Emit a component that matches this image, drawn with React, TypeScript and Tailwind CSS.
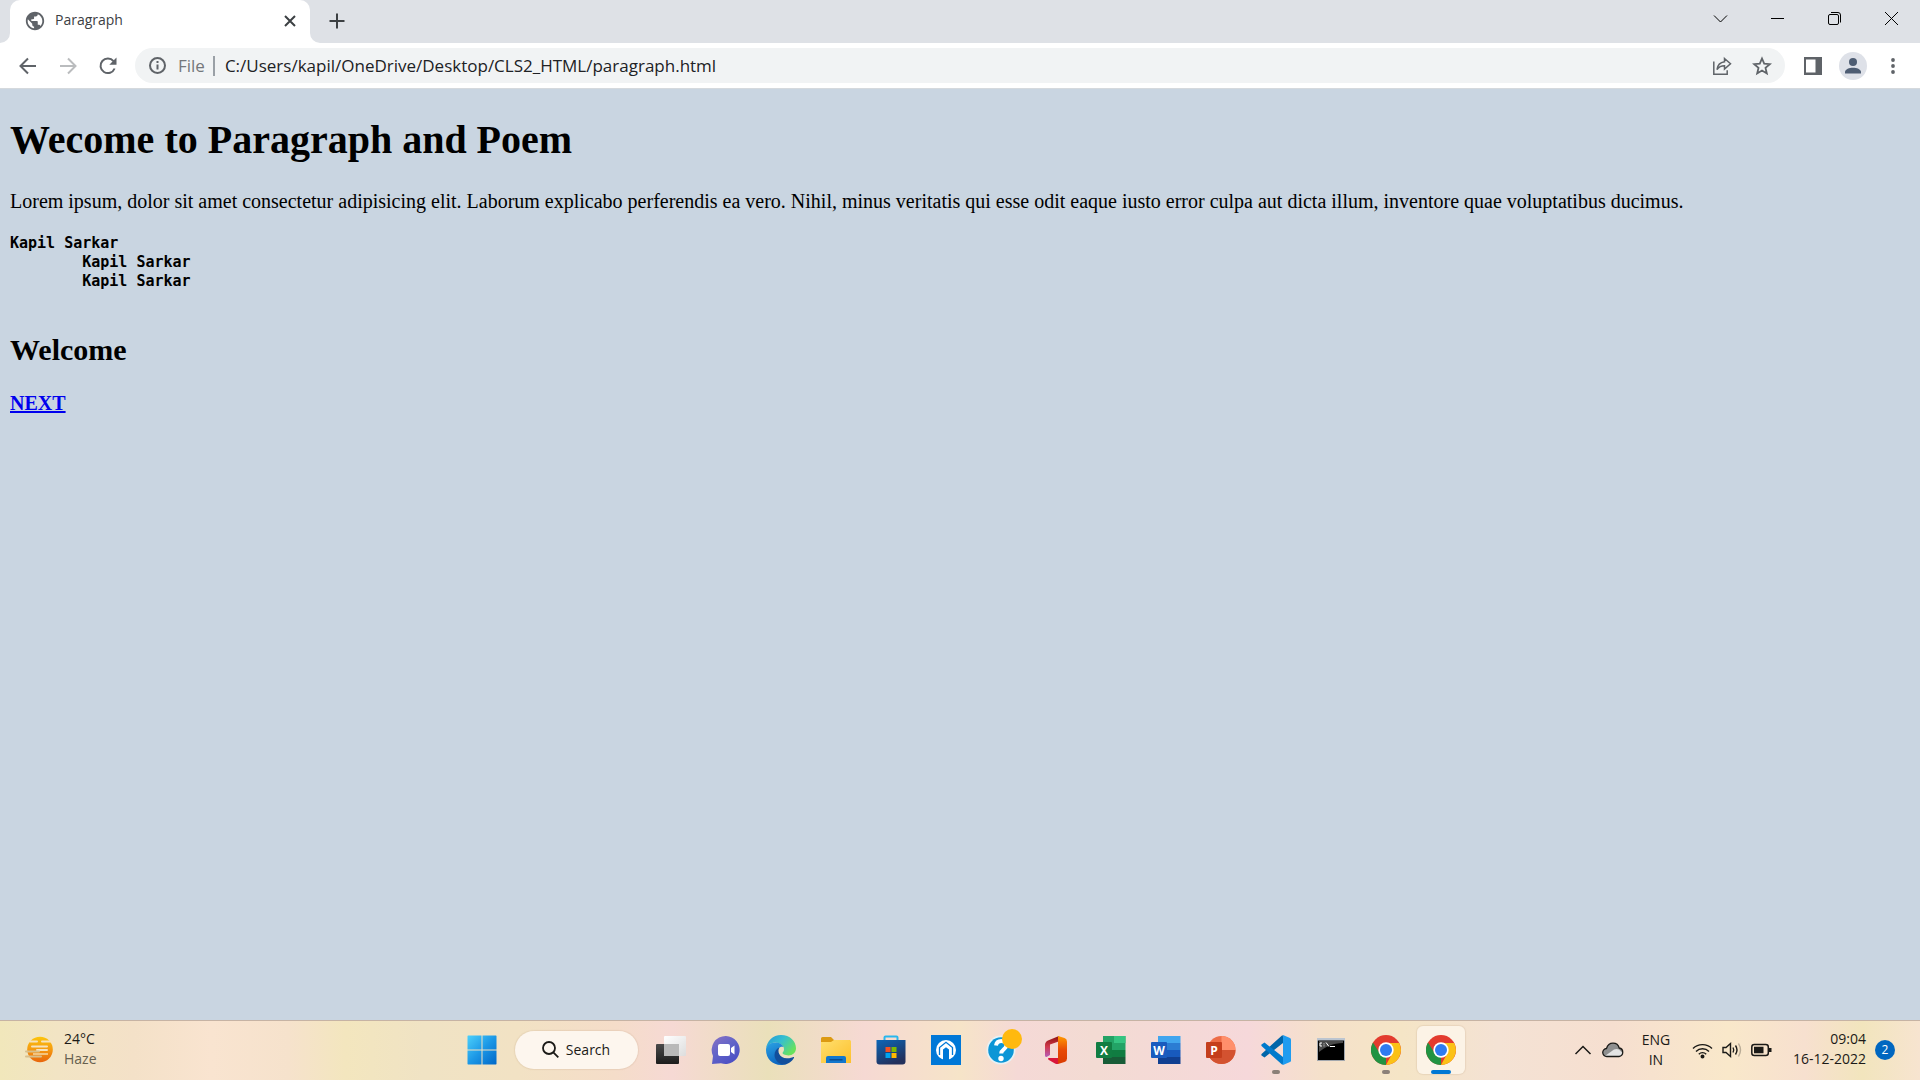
import React from "react";

type Kids = { children?: React.ReactNode };

/* ---------- Browser chrome ---------- */

function WindowButton({ label, children }: Kids & { label: string }) {
  return (
    <button aria-label={label} className="flex h-9 w-[57px] items-center justify-center text-black">
      <svg width="15" height="15" viewBox="0 0 15 15" fill="none" stroke="currentColor">
        {children}
      </svg>
    </button>
  );
}

function TabStrip() {
  return (
    <div className="flex h-[43px] justify-between bg-[#dee1e6]">
      <div className="flex">
        <svg className="self-end" width="10" height="10" viewBox="0 0 10 10">
          <path d="M10 0v10H0A10 10 0 0 0 10 0Z" fill="#fff" />
        </svg>
        <div className="flex w-[300px] items-center rounded-t-[10px] bg-white pr-3 pb-px pl-[14px]">
          <svg width="22" height="22" viewBox="0 0 24 24" fill="#5f6368">
            <path d="M12 2C6.480 2 2 6.480 2 12s4.480 10 10 10 10-4.480 10-10S17.520 2 12 2zm-1 17.930c-3.950-.490-7-3.850-7-7.930 0-.620.080-1.210.210-1.790L9 15v1c0 1.100.900 2 2 2v1.930zm6.900-2.540c-.260-.810-1-1.390-1.900-1.390h-1v-3c0-.550-.450-1-1-1H8v-2h2c.550 0 1-.450 1-1V7h2c1.100 0 2-.900 2-2v-.410c2.930 1.190 5 4.060 5 7.410 0 2.080-.800 3.970-2.100 5.390z" />
          </svg>
          <span className="ml-[9px] flex-1 pb-[2px] text-sm leading-5 text-[#3c4043]">Paragraph</span>
          <button aria-label="Close tab" className="flex size-4 items-center justify-center">
            <svg width="12" height="12" viewBox="0 0 12 12" stroke="#3c4043" strokeWidth="2">
              <path d="M1 1l10 10M11 1L1 11" />
            </svg>
          </button>
        </div>
        <svg className="self-end" width="10" height="10" viewBox="0 0 10 10">
          <path d="M0 0v10h10A10 10 0 0 1 0 0Z" fill="#fff" />
        </svg>
        <button aria-label="New tab" className="flex w-[34px] items-center justify-center pb-px">
          <svg width="16" height="16" viewBox="0 0 16 16" stroke="#3c4043" strokeWidth="2">
            <path d="M8 .5v15M.5 8h15" />
          </svg>
        </button>
      </div>
      <div className="flex">
        <WindowButton label="Search tabs">
          <path d="M1 4.500l6.500 6.500 6.500-6.500" />
        </WindowButton>
        <WindowButton label="Minimize">
          <path d="M1 7.500h13" />
        </WindowButton>
        <WindowButton label="Restore">
          <rect x="1.500" y="3.500" width="10" height="10" rx="1.500" />
          <path d="M4 1.500h7a2.500 2.500 0 0 1 2.500 2.500v7.500" />
        </WindowButton>
        <WindowButton label="Close">
          <path d="M1 1l13 13M14 1L1 14" />
        </WindowButton>
      </div>
    </div>
  );
}

function ToolButton({ label, children }: Kids & { label: string }) {
  return (
    <button aria-label={label} className="flex h-8 w-10 shrink-0 items-center justify-center">
      {children}
    </button>
  );
}

function Toolbar() {
  return (
    <div className="flex h-[46px] items-center border-b border-[#d5d9dd] bg-white pr-[7px] pl-2">
      <ToolButton label="Back">
        <svg width="18" height="18" viewBox="0 0 18 18" fill="none" stroke="#5f6368" strokeWidth="2">
          <path d="M17 9H2M9 1.500L1.500 9 9 16.500" />
        </svg>
      </ToolButton>
      <ToolButton label="Forward">
        <svg width="18" height="18" viewBox="0 0 18 18" fill="none" stroke="#babcbe" strokeWidth="2">
          <path d="M1 9h15M9 1.500L16.500 9 9 16.500" />
        </svg>
      </ToolButton>
      <ToolButton label="Reload">
        <svg width="18" height="18" viewBox="0 0 18 18" fill="none">
          <path d="M15.600 11.500A7.300 7.300 0 1 1 14.500 4.200" stroke="#5f6368" strokeWidth="2" />
          <path d="M17.500 .5v7.200h-7.200Z" fill="#5f6368" />
        </svg>
      </ToolButton>
      <div className="ml-[7px] flex h-[35px] flex-1 items-center rounded-full bg-[#f1f3f4] pr-[3px] pl-[14px]">
        <svg width="17" height="17" viewBox="0 0 17 17" fill="none" stroke="#5f6368" strokeWidth="2">
          <circle cx="8.500" cy="8.500" r="7.500" />
          <path d="M8.500 7.500v5M8.500 4v2" />
        </svg>
        <label htmlFor="url" className="ml-3 text-[17px] leading-6 text-[#74777b]">
          File
        </label>
        <span className="ml-2 h-5 w-[2px] bg-[#9aa0a6]" />
        <input
          id="url"
          className="ml-[10px] min-w-0 flex-1 bg-transparent text-[17px] leading-6 text-[#202124] outline-none"
          defaultValue="C:/Users/kapil/OneDrive/Desktop/CLS2_HTML/paragraph.html"
        />
        <ToolButton label="Share">
          <svg width="20" height="20" viewBox="0 0 20 20" fill="none" stroke="#5f6368" strokeWidth="1.500">
            <path d="M1.800 5.500v12.800h13.400v-4" />
            <path d="M12.500 2.500l6 5.300-6 5.300v-3.300c-3.500 0-5.700 1.200-7.500 3.800.5-4 3-7.200 7.500-7.800Z" />
          </svg>
        </ToolButton>
        <ToolButton label="Bookmark">
          <svg width="20" height="20" viewBox="0 0 20 20" fill="none" stroke="#5f6368" strokeWidth="1.800">
            <path d="M10 2.500l2.200 5.200 5.600.5-4.300 3.700 1.300 5.500-4.800-2.900-4.800 2.900 1.300-5.500L2.200 8.200l5.600-.5Z" />
          </svg>
        </ToolButton>
      </div>
      <div className="ml-2 flex">
        <ToolButton label="Side panel">
          <svg width="18" height="18" viewBox="0 0 18 18">
            <path fillRule="evenodd" d="M0 0h18v18H0ZM2 2.500v13h9.500v-13Z" fill="#5f6368" />
          </svg>
        </ToolButton>
        <ToolButton label="Profile">
          <svg width="28" height="28" viewBox="0 0 28 28">
            <circle cx="14" cy="14" r="14" fill="#dee1e8" />
            <circle cx="14" cy="10" r="4" fill="#4e5d73" />
            <path d="M6 21.500v-1.500c0-2.700 4.500-4.200 8-4.200s8 1.500 8 4.200v1.500Z" fill="#4e5d73" />
          </svg>
        </ToolButton>
        <ToolButton label="Menu">
          <svg width="4" height="16" viewBox="0 0 4 16" fill="#5f6368">
            <circle cx="2" cy="2" r="1.900" />
            <circle cx="2" cy="8" r="1.900" />
            <circle cx="2" cy="14" r="1.900" />
          </svg>
        </ToolButton>
      </div>
    </div>
  );
}

/* ---------- Page ---------- */

const poem = "Kapil Sarkar\n        Kapil Sarkar\n        Kapil Sarkar\n";

function Page() {
  return (
    <main className="flex-1 bg-[#c9d5e1] px-[10px] pt-7 font-['Liberation_Serif',serif] text-xl text-black">
      <h1 className="text-[40px] leading-[46px] font-bold">Wecome to Paragraph and Poem</h1>
      <p className="mt-[26px] leading-6">
        Lorem ipsum, dolor sit amet consectetur adipisicing elit. Laborum explicabo perferendis ea vero. Nihil, minus
        veritatis qui esse odit eaque iusto error culpa aut dicta illum, inventore quae voluptatibus ducimus.
      </p>
      <pre className="mt-[21px] font-['DejaVu_Sans_Mono',monospace] text-[15px] leading-[19px] font-bold">{poem}</pre>
      <h2 className="mt-[42px] text-3xl leading-[34px] font-bold">Welcome</h2>
      <a href="#next" className="mt-6 inline-block leading-6 font-bold text-[#0000ee] underline">
        NEXT
      </a>
    </main>
  );
}

/* ---------- Taskbar icons ---------- */

function StartIcon() {
  return (
    <svg width="30" height="30" viewBox="0 0 30 30">
      <defs>
        <linearGradient id="win" x1="0" y1="0" x2="1" y2="1">
          <stop offset="0" stopColor="#4cd0fb" />
          <stop offset="0.500" stopColor="#1c98e6" />
          <stop offset="1" stopColor="#0067c8" />
        </linearGradient>
      </defs>
      <path
        d="M1 .5h13.500v14H.5V1ZM15.500 .5h13.500l.5.5v13.500h-14ZM.5 15.500h14v14H1l-.5-.5ZM15.500 15.500h14V29l-.5.5h-13.500Z"
        fill="url(#win)"
      />
    </svg>
  );
}

function TaskViewIcon() {
  return (
    <svg width="30" height="30" viewBox="0 0 30 30">
      <defs>
        <linearGradient id="tvd" x1="0" y1="0" x2="0" y2="1">
          <stop offset="0" stopColor="#4a4a4a" />
          <stop offset="1" stopColor="#1c1c1c" />
        </linearGradient>
        <linearGradient id="tvl" x1="0" y1="0" x2="1" y2="1">
          <stop offset="0" stopColor="#fff" />
          <stop offset="1" stopColor="#ddd" />
        </linearGradient>
      </defs>
      <rect x="8" y="1" width="22" height="20" rx="1" fill="url(#tvl)" />
      <rect x="0" y="9" width="23" height="20" rx="1" fill="url(#tvd)" />
      <rect x="8" y="9" width="15" height="12" fill="#b9b9b9" />
    </svg>
  );
}

function ChatIcon() {
  return (
    <svg width="30" height="30" viewBox="0 0 30 30">
      <defs>
        <linearGradient id="chat" x1="0" y1="0" x2="0.700" y2="1">
          <stop offset="0" stopColor="#8a72c4" />
          <stop offset="0.500" stopColor="#6264c8" />
          <stop offset="1" stopColor="#4b4fc4" />
        </linearGradient>
      </defs>
      <path d="M15 1a14 14 0 1 1-5 27.200L1 29l1-8A14 14 0 0 1 15 1Z" fill="url(#chat)" />
      <rect x="7" y="9" width="12" height="12" rx="2" fill="#fff" />
      <path d="M20 13l3.500-2.500v9L20 17Z" fill="#fff" />
    </svg>
  );
}

function EdgeIcon() {
  return (
    <svg width="30" height="30" viewBox="0 0 30 30">
      <defs>
        <linearGradient id="eTop" x1="0" y1="0" x2="1" y2="0.600">
          <stop offset="0" stopColor="#2495d8" />
          <stop offset="0.500" stopColor="#35bfd0" />
          <stop offset="1" stopColor="#68e25c" />
        </linearGradient>
        <linearGradient id="eLeft" x1="0" y1="0" x2="0.400" y2="1">
          <stop offset="0" stopColor="#2ba3e4" />
          <stop offset="1" stopColor="#0c66c0" />
        </linearGradient>
      </defs>
      <path
        d="M0 14C.8 6 7 0 15 0c9 0 15 6.300 15 13.200 0 4.500-3.500 7.200-7.500 7.200-4 0-6-1.300-6-2.300s1.500-1.500 1.500-3.900C18 10.500 14 7.500 9.500 7.500 4.500 7.500 1 10.500 0 14Z"
        fill="url(#eTop)"
      />
      <path
        d="M0 15C0 10.500 4 7.500 9.500 7.500c4 0 7 2 8 4.500-3-1-7 1.500-7 6.500 0 5.500 5 10 9.500 10.500-1.500.700-3.500 1-5 1C6.500 30 0 23.500 0 15Z"
        fill="url(#eLeft)"
      />
      <path
        d="M13.500 12.500c-2.500 3.500-.5 10.500 7.500 10.800 3 .100 5-.800 6.200-1.300.700-.300 1.100.300.700.900C26 26.500 22 29.300 18 29.500 12 29 8.500 24.500 8.500 20c0-3.500 2-6.500 5-7.500Z"
        fill="#124f9c"
      />
    </svg>
  );
}

function ExplorerIcon() {
  return (
    <svg width="30" height="28" viewBox="0 0 30 28">
      <defs>
        <linearGradient id="fold" x1="0" y1="0" x2="1" y2="1">
          <stop offset="0" stopColor="#ffdf6e" />
          <stop offset="1" stopColor="#fdc02c" />
        </linearGradient>
      </defs>
      <path d="M0 2.500Q0 1 1.500 1H10l3 3h16v4H0Z" fill="#dc9a12" />
      <path d="M0 6h10l3-2h15.500Q30 4 30 5.500V27H0Z" fill="url(#fold)" />
      <path d="M5 27v-5q0-2 2-2h16q2 0 2 2v5Z" fill="#1277cd" />
      <rect x="8.500" y="23" width="13" height="1.500" fill="#0b4c90" />
    </svg>
  );
}

function StoreIcon() {
  return (
    <svg width="30" height="30" viewBox="0 0 30 30">
      <defs>
        <linearGradient id="bag" x1="0" y1="0" x2="0.500" y2="1">
          <stop offset="0" stopColor="#0b66b7" />
          <stop offset="1" stopColor="#23305c" />
        </linearGradient>
      </defs>
      <path d="M8.500 6V2.500q0-1 1-1h11q1 0 1 1V6" fill="none" stroke="#29b7ee" strokeWidth="2" />
      <path d="M.5 5h29v21.500q0 3-3 3h-23q-3 0-3-3Z" fill="url(#bag)" />
      <path d="M9.500 12h5v5h-5Z" fill="#f25022" />
      <path d="M15.500 12h5v5h-5Z" fill="#7fba00" />
      <path d="M9.500 18h5v5h-5Z" fill="#00a4ef" />
      <path d="M15.500 18h5v5h-5Z" fill="#ffb900" />
    </svg>
  );
}

function AssistantIcon() {
  return (
    <svg width="30" height="30" viewBox="0 0 30 30" fill="none">
      <path d="M0 0h30v30H0Z" fill="#0078d7" />
      <circle cx="15" cy="15" r="10" fill="#fff" />
      <path d="M8.500 20v-7.500L15 7.300l6.500 5.200V20" stroke="#0078d7" strokeWidth="1.300" />
      <path d="M12 26V14.500l3-2.300 3 2.300V26Z" fill="#0078d7" />
    </svg>
  );
}

function HelpIcon() {
  return (
    <svg className="overflow-visible" width="30" height="30" viewBox="0 0 30 30">
      <circle cx="15" cy="15" r="14.500" fill="#e6f1f5" />
      <circle cx="15" cy="15" r="12.800" fill="#0c96d6" />
      <path
        d="M10 10.500c.5-3 2.500-4.500 5.200-4.500 3 0 5.200 1.800 5.200 4.400 0 3.800-5.200 4-5.200 8.100"
        fill="none"
        stroke="#fff"
        strokeWidth="4"
      />
      <circle cx="15" cy="23.500" r="2.700" fill="#fff" />
      <circle cx="26" cy="4" r="10" fill="#ffb90f" />
    </svg>
  );
}

function OfficeIcon() {
  return (
    <svg width="30" height="30" viewBox="0 0 30 30">
      <defs>
        <linearGradient id="offL" x1="0" y1="0" x2="0" y2="1">
          <stop offset="0" stopColor="#8b0f0f" />
          <stop offset="0.500" stopColor="#d03a4c" />
          <stop offset="1" stopColor="#b65bb8" />
        </linearGradient>
        <linearGradient id="offR" x1="0" y1="0" x2="0" y2="1">
          <stop offset="0" stopColor="#ff9a00" />
          <stop offset="0.500" stopColor="#e84a05" />
          <stop offset="1" stopColor="#d93a00" />
        </linearGradient>
      </defs>
      <path d="M18 1L7 5.500Q4 7 4 10v10.500q0 2 2 1.200l3-1.700V9.500l10-3.500Z" fill="url(#offL)" />
      <path d="M17 1l6.500 2q2.500.800 2.500 3.500v17q0 2.700-2.500 3.500L17 29Z" fill="url(#offR)" />
      <path d="M7.500 23H17v6q-1.500.300-3-.500L7.500 24.800Q6.500 23.500 7.500 23Z" fill="#d9163a" />
    </svg>
  );
}

const officeText = "'Open Sans', sans-serif";

function Tile({ letter, fill }: { letter: string; fill: string }) {
  return (
    <>
      <rect x="0" y="7" width="16" height="16" rx="1" fill={fill} />
      <text x="8" y="19.500" textAnchor="middle" fontFamily={officeText} fontWeight="700" fontSize="12" fill="#fff">
        {letter}
      </text>
    </>
  );
}

function ExcelIcon() {
  return (
    <svg width="30" height="30" viewBox="0 0 30 30">
      <path d="M7 1h22.500v14H7Z" fill="#23a366" />
      <path d="M18 1h11.500v7H18Z" fill="#34c481" />
      <path d="M7 15h22.500v7H7Z" fill="#107c41" />
      <path d="M7 22h22.500v7H7Z" fill="#185c37" />
      <Tile letter="X" fill="#117d42" />
    </svg>
  );
}

function WordIcon() {
  return (
    <svg width="30" height="30" viewBox="0 0 30 30">
      <path d="M7 1h22.500v7H7Z" fill="#41a5ee" />
      <path d="M7 8h22.500v7H7Z" fill="#2b7cd3" />
      <path d="M7 15h22.500v7H7Z" fill="#185abd" />
      <path d="M7 22h22.500v7H7Z" fill="#103f91" />
      <Tile letter="W" fill="#1a5bbe" />
    </svg>
  );
}

function PowerPointIcon() {
  return (
    <svg width="30" height="30" viewBox="0 0 30 30">
      <circle cx="15.500" cy="15" r="14" fill="#ed6c47" />
      <path d="M15.500 1a14 14 0 0 1 14 14h-14Z" fill="#ff8f6b" />
      <path d="M1.500 15h28a14 14 0 0 1-28 0Z" fill="#d35230" />
      <Tile letter="P" fill="#c43e1c" />
    </svg>
  );
}

function CodeIcon() {
  return (
    <svg width="30" height="30" viewBox="0 0 30 30">
      <path d="M22 8L3.500 22.500 .5 20.500Q0 19.500 .8 18.700L21.500 0 24 8Z" fill="#0065a9" />
      <path d="M22 22L3.500 7.500 .5 9.500Q0 10.500 .8 11.300L21.500 30 24 22Z" fill="#007acc" />
      <path d="M22 0l7 3q1 .5 1 1.500v21q0 1-1 1.500l-7 3Z" fill="#1f9cf0" />
    </svg>
  );
}

function TerminalIcon() {
  return (
    <svg width="28" height="24" viewBox="0 0 28 24">
      <rect x="0.500" y="0.500" width="27" height="22" fill="#000" stroke="#a3a8ae" />
      <path d="M0 0h28v2.500H0Z" fill="#bcc5d0" />
      <path d="M2 3h24v2C16 5 8 9 2 14Z" fill="#4a4a4a" />
      <path d="M5 5H3v3h2M7 5.500v.8M7 7.500v.8M9 4.500l3 4M13 8.500h5" stroke="#fff" fill="none" />
    </svg>
  );
}

function ChromeIcon() {
  return (
    <svg width="30" height="30" viewBox="0 0 30 30">
      <circle cx="15" cy="15" r="15" fill="#e33b2e" />
      <path d="M2 7.500L8.900 18.500 15 22v8A15 15 0 0 1 2 7.500Z" fill="#229342" />
      <path d="M15 8h13.200A15 15 0 0 1 15 30l6.200-11.500Z" fill="#fbc116" />
      <circle cx="15" cy="15" r="7.700" fill="#fff" />
      <circle cx="15" cy="15" r="6" fill="#2f7bf0" />
    </svg>
  );
}

type TaskApp = { name: string; icon: React.ReactNode; state?: "open" | "active" };

const apps: TaskApp[] = [
  { name: "Task View", icon: <TaskViewIcon /> },
  { name: "Chat", icon: <ChatIcon /> },
  { name: "Microsoft Edge", icon: <EdgeIcon /> },
  { name: "File Explorer", icon: <ExplorerIcon /> },
  { name: "Microsoft Store", icon: <StoreIcon /> },
  { name: "Assistant", icon: <AssistantIcon /> },
  { name: "Get Help", icon: <HelpIcon /> },
  { name: "Office", icon: <OfficeIcon /> },
  { name: "Excel", icon: <ExcelIcon /> },
  { name: "Word", icon: <WordIcon /> },
  { name: "PowerPoint", icon: <PowerPointIcon /> },
  { name: "Visual Studio Code", icon: <CodeIcon />, state: "open" },
  { name: "Command Prompt", icon: <TerminalIcon /> },
  { name: "Google Chrome", icon: <ChromeIcon />, state: "open" },
  { name: "Google Chrome, Paragraph", icon: <ChromeIcon />, state: "active" },
];

function TaskButton({ app }: { app: TaskApp }) {
  const active = app.state === "active";
  return (
    <button
      aria-label={app.name}
      className={
        "relative flex h-12 w-12 items-center justify-center rounded-md " +
        (active ? "bg-[#fcf3e6] shadow-[0_0_1px_1px_rgba(190,160,130,0.2)]" : "")
      }
    >
      {app.icon}
      {app.state === "open" && <span className="absolute bottom-0 left-5 h-1 w-2 rounded-full bg-[#8b8078]" />}
      {active && <span className="absolute bottom-0 left-[14px] h-1 w-5 rounded-full bg-[#0078d4]" />}
    </button>
  );
}

function Weather() {
  return (
    <button aria-label="Weather" className="flex h-full items-center gap-[9px] pl-[25px] text-left">
      <svg width="30" height="28" viewBox="0 0 30 28">
        <defs>
          <linearGradient id="sun" x1="0" y1="0" x2="0" y2="1">
            <stop offset="0" stopColor="#fcc50c" />
            <stop offset="0.500" stopColor="#f59a10" />
            <stop offset="1" stopColor="#e8650c" />
          </linearGradient>
        </defs>
        <circle cx="15" cy="13.500" r="12.800" fill="url(#sun)" />
        <g stroke="#f6e3bd" strokeWidth="2" strokeLinecap="round">
          <path d="M5 5.500h7M17 5.500h12M7 10.500h15M12 14h10" />
        </g>
        <g stroke="#d8bf8c" strokeWidth="2" strokeLinecap="round">
          <path d="M1 15.500h13M1 20.500h15" />
        </g>
        <path d="M8 18h15" stroke="#f6d9a5" strokeWidth="1.500" />
      </svg>
      <span className="flex flex-col pb-[2px] text-sm leading-5">
        <span className="text-[#1b1a17]">24°C</span>
        <span className="text-[#66604f]">Haze</span>
      </span>
    </button>
  );
}

function Tray() {
  return (
    <div className="flex h-full items-center justify-end pr-[25px] text-sm leading-5 text-[#1b1a17]">
      <button aria-label="Show hidden icons">
        <svg width="18" height="12" viewBox="0 0 18 12" fill="none" stroke="currentColor" strokeWidth="1.500">
          <path d="M1.500 10L9 2.500l7.500 7.500" />
        </svg>
      </button>
      <button aria-label="OneDrive" className="ml-[10px]">
        <svg width="22" height="16" viewBox="0 0 22 16">
          <path
            d="M5 14.500a4 4 0 0 1-.5-8C5.500 3 8 1.200 11 1.200c3.200 0 5.500 2 6.200 4.800A4.300 4.300 0 0 1 17 14.500Z"
            fill="#8f8f8f"
          />
          <path d="M3 14L12 7.500q2.500-1 5 0l3.500 3.500q-1 3.500-3.500 3.500H5Z" fill="#e4e4e4" />
          <path
            d="M5 14.500a4 4 0 0 1-.5-8C5.500 3 8 1.200 11 1.200c3.200 0 5.500 2 6.200 4.800A4.300 4.300 0 0 1 17 14.500Z"
            fill="none"
            stroke="#1b1a17"
            strokeWidth="1.300"
          />
        </svg>
      </button>
      <button className="ml-4 flex w-[32px] flex-col items-center">
        <span>ENG</span>
        <span>IN</span>
      </button>
      <button aria-label="Network, volume and battery" className="ml-5 flex items-center gap-[9px]">
        <svg width="21" height="18" viewBox="0 0 21 18" fill="none" stroke="currentColor" strokeWidth="1.400">
          <path d="M1 7.500a13.500 13.500 0 0 1 19 0M4 10.500a9.200 9.200 0 0 1 13 0M6.800 13.200a5.200 5.200 0 0 1 7.400 0" />
          <circle cx="10.500" cy="15.500" r="1.300" fill="currentColor" />
        </svg>
        <svg width="20" height="18" viewBox="0 0 20 18" fill="none" stroke="currentColor" strokeWidth="1.400">
          <path d="M1 6.500h3L8.500 2.500v13L4 11.500H1Z" />
          <path d="M11 6.500q1.500 2.500 0 5M13.500 4.500q3 4.500 0 9" />
          <path d="M16.500 2.500q4 6.500 0 13" stroke="#b9ab96" />
        </svg>
        <svg width="21" height="14" viewBox="0 0 21 14" fill="none">
          <rect x="0.800" y="1.500" width="16.500" height="11" rx="2.500" stroke="#1b1a17" strokeWidth="1.500" />
          <path d="M3 3.800h9.500v6.500H3ZM18 5h2.500v4H18Z" fill="#1b1a17" />
        </svg>
      </button>
      <button className="ml-[21px] flex flex-col items-end pb-[2px]">
        <span>09:04</span>
        <span>16-12-2022</span>
      </button>
      <button
        aria-label="2 notifications"
        className="ml-[9px] flex size-5 items-center justify-center rounded-full bg-[#0067c0] text-xs text-white"
      >
        2
      </button>
    </div>
  );
}

function Taskbar() {
  return (
    <footer className="grid h-[60px] grid-cols-[1fr_auto_1fr] border-t border-[#c6b3a4] bg-[linear-gradient(90deg,#f1e7bb_0%,#f2e4c4_3%,#f4e1c8_7%,#f9e4d0_11%,#f6e2cc_15%,#f3e6be_18%,#f0e3c4_22%,#f2e2c4_27%,#f5ddc9_32%,#f6d9d4_35%,#eae0ba_40%,#f6d9d3_45%,#f6e4c8_50%,#f5d9d6_53%,#f3dbd3_57%,#f6d8da_65%,#f5e1ca_69%,#f5e5c6_73%,#f4e2d4_78%,#f6dfd0_84%,#f9e8ca_90%,#f7e0cf_94%,#f2e5bd_97%,#f7e4d0_100%)] pb-[2px]">
      <Weather />
      <nav className="flex items-center gap-[7px] pl-[2px]">
        <button aria-label="Start" className="flex size-12 items-center justify-center">
          <StartIcon />
        </button>
        <button className="mx-[2px] flex h-[38px] w-[123px] items-center justify-center gap-[7px] rounded-full bg-[#fdf6ee] text-sm leading-5 text-[#1b1a17] shadow-[0_0_1px_1px_rgba(190,160,130,0.2)]">
          <svg width="17" height="17" viewBox="0 0 17 17" fill="none" stroke="currentColor" strokeWidth="1.800">
            <circle cx="7" cy="7" r="6" />
            <path d="M11.300 11.300l5 5" />
          </svg>
          Search
        </button>
        {apps.map((app) => (
          <TaskButton key={app.name} app={app} />
        ))}
      </nav>
      <Tray />
    </footer>
  );
}

export default function App() {
  return (
    <div className="flex min-h-screen flex-col font-['Open_Sans',sans-serif]">
      <TabStrip />
      <Toolbar />
      <Page />
      <Taskbar />
    </div>
  );
}
